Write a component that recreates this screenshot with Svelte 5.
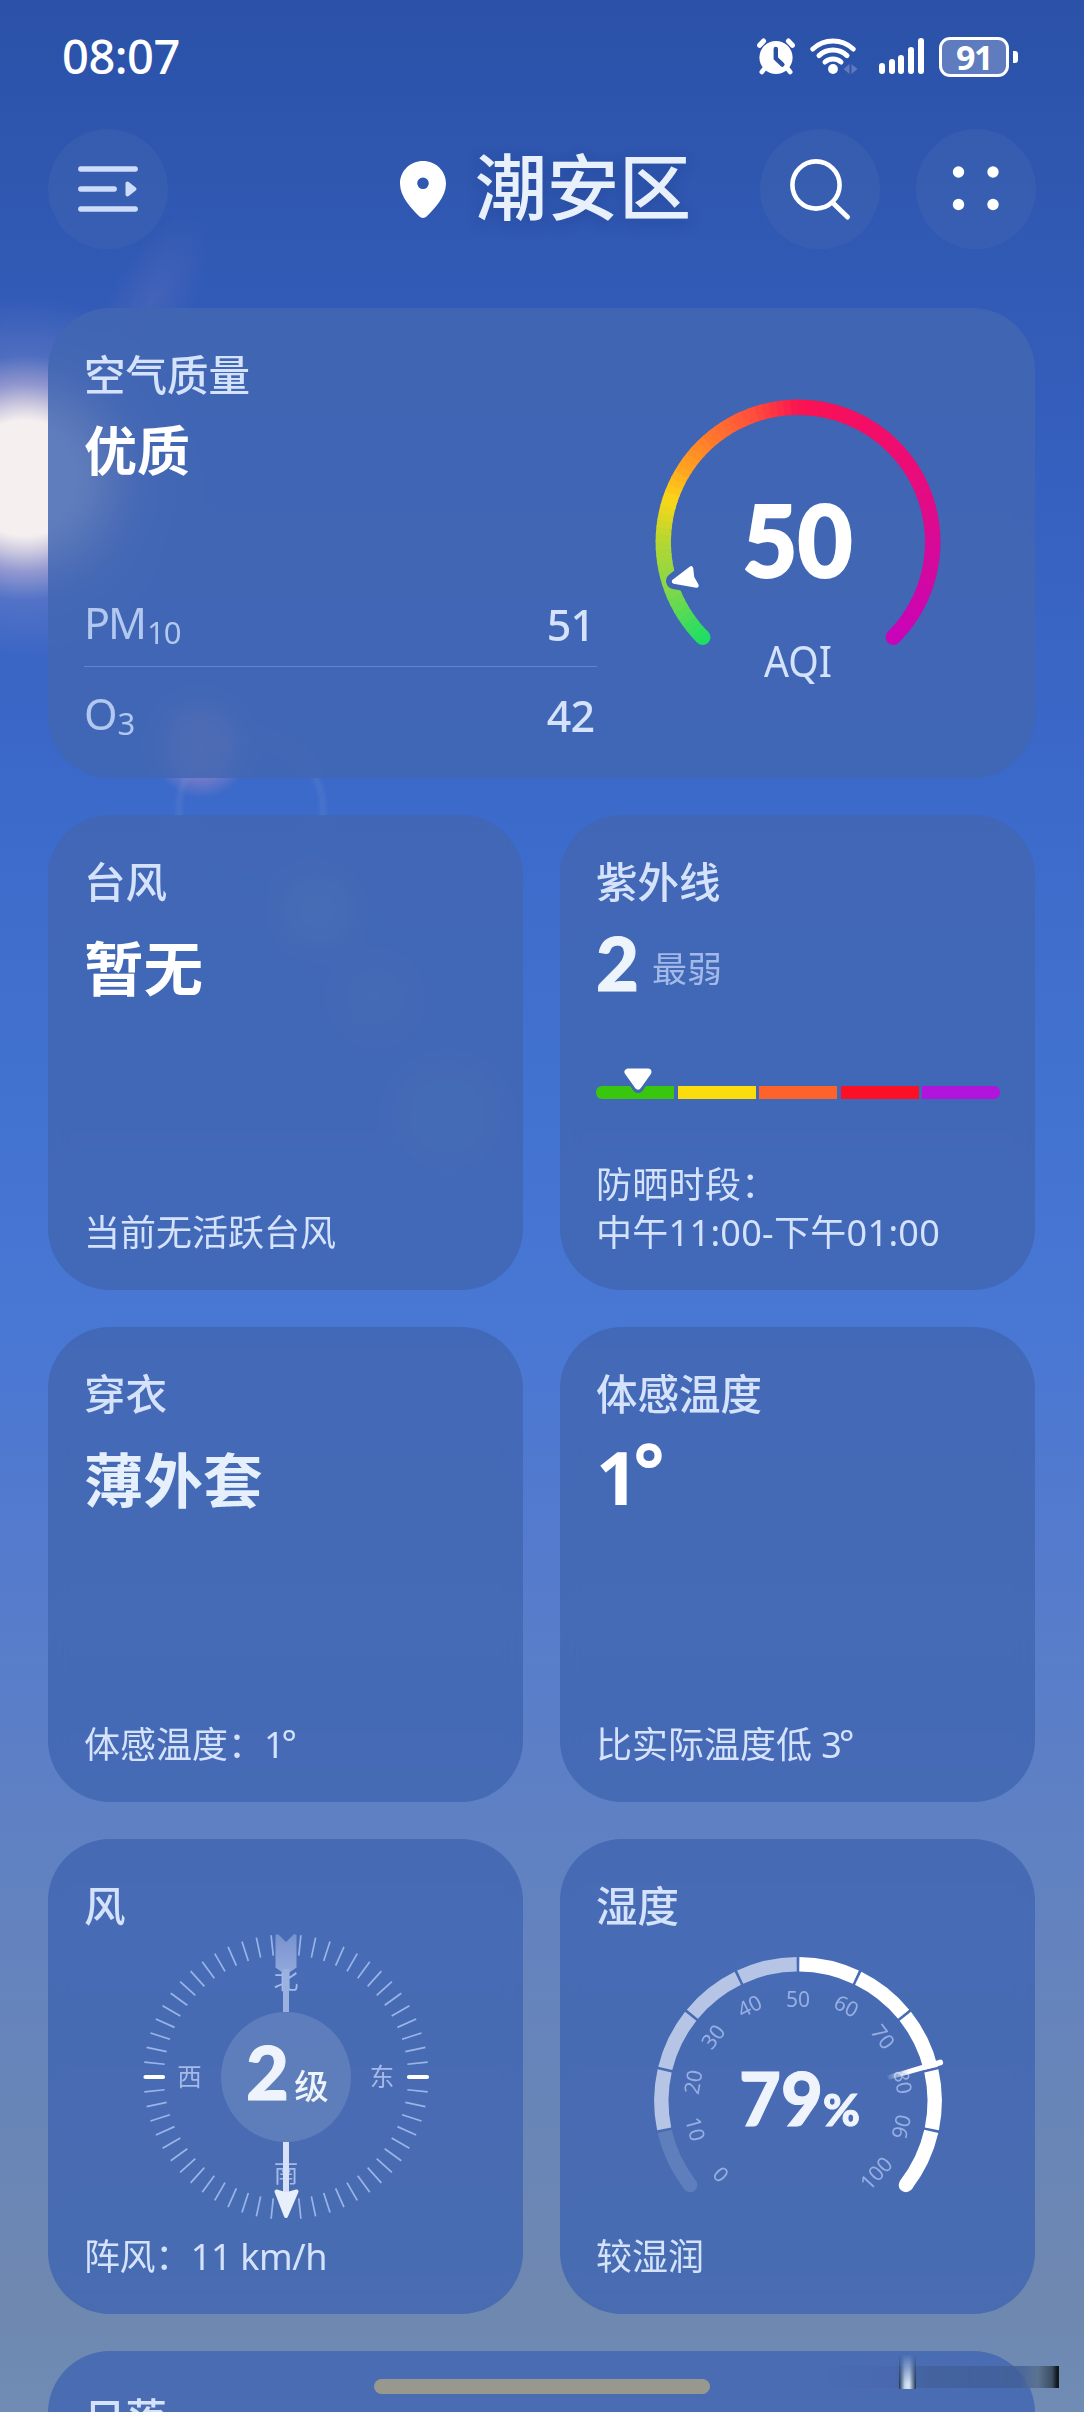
<script lang="ts">
	type Segment = { d: string; fill: string };

	const pollutants = [
		{ name: 'PM', sub: '10', value: 51 },
		{ name: 'O', sub: '3', value: 42 }
	];

	const uvColors = ['#39c60f', '#fbdc0c', '#fd632b', '#fc1026', '#b115dc'];

	const bars = [11, 15, 19.5, 27, 36];

	// angles are measured clockwise from twelve o'clock
	function polar(cx: number, cy: number, r: number, deg: number) {
		const a = ((deg - 90) * Math.PI) / 180;
		return { x: cx + r * Math.cos(a), y: cy + r * Math.sin(a) };
	}

	function arc(cx: number, cy: number, r: number, from: number, to: number) {
		const a = polar(cx, cy, r, from);
		const b = polar(cx, cy, r, to);
		const large = to - from > 180 ? 1 : 0;
		return `M${a.x.toFixed(2)} ${a.y.toFixed(2)}A${r} ${r} 0 ${large} 1 ${b.x.toFixed(2)} ${b.y.toFixed(2)}`;
	}

	const ticks = Array.from({ length: 60 }, (_, i) => i * 6).filter((d) => d % 90 !== 0);

	const step = 25.58;
	const segments: Segment[] = Array.from({ length: 10 }, (_, i) => ({
		d: arc(150, 150, 136.7, (i - 5) * step + (i ? 0.55 : 0), (i - 4) * step - (i < 9 ? 0.55 : 0)),
		fill: i === 0 ? 'rgb(255 255 255 / 0.13)' : i < 5 ? '#b6c5e5' : '#ffffff'
	}));

	const capOuter = polar(150, 150, 143.9, -5 * step);
	const capInner = polar(150, 150, 129.5, -5 * step);
	const startCap = `M${capOuter.x} ${capOuter.y}A7.2 7.2 0 0 0 ${capInner.x} ${capInner.y}Z`;
	const endCap = polar(150, 150, 136.7, 5 * step);

	const dial = [-133.6, -105.3, -79.7, -52.8, -27, 0, 27, 53, 79.7, 104, 132.8].map((deg, i) => ({
		label: i * 10,
		...polar(150, 150, i === 5 ? 101.5 : 106.5, deg),
		turn: Math.abs(deg) > 90 ? deg - Math.sign(deg) * 180 : deg
	}));

	// AQI ring colour stops, painted as short overlapping arcs
	const stops: [number, number[]][] = [
		[-135, [32, 222, 100]],
		[-108, [140, 215, 70]],
		[-90, [180, 215, 50]],
		[-72, [250, 215, 25]],
		[-58, [255, 165, 32]],
		[-40, [255, 120, 45]],
		[-18, [255, 75, 60]],
		[0, [250, 20, 80]],
		[20, [245, 15, 95]],
		[55, [236, 12, 118]],
		[90, [216, 10, 150]],
		[135, [200, 4, 185]]
	];

	function ringColor(deg: number) {
		let i = 0;
		while (i < stops.length - 2 && deg > stops[i + 1][0]) i++;
		const [a, ca] = stops[i];
		const [b, cb] = stops[i + 1];
		const t = (deg - a) / (b - a);
		return `rgb(${ca.map((c, k) => Math.round(c + (cb[k] - c) * t)).join(',')})`;
	}

	const ring = Array.from({ length: 90 }, (_, i) => {
		const from = -135 + i * 3;
		return { d: arc(150, 150, 134.7, from, Math.min(from + 3.6, 135)), color: ringColor(from + 1.5) };
	});
</script>

<div class="screen">
	<div class="sky" aria-hidden="true">
		<i class="sun"></i>
		<i class="ray"></i>
		<i class="orb orb-a"></i>
		<i class="halo"></i>
		<i class="orb orb-b"></i>
		<i class="orb orb-c"></i>
		<i class="orb orb-d"></i>
	</div>

	<div class="status">
		<span class="clock">08:07</span>
		<div class="status-icons">
			<svg class="alarm" width="38" height="38" viewBox="0 0 38 38">
				<circle cx="19" cy="20.5" r="16.6" fill="#fff" />
				<path d="M2.6 8.3 6.6 4M35.4 8.3 31.4 4" stroke="#fff" stroke-width="5" stroke-linecap="round" />
				<path d="M8 31 4.8 35M30 31l3.2 4" stroke="#fff" stroke-width="4.6" stroke-linecap="round" />
				<path d="M18.8 12v9.4l6.6 6.2" fill="none" stroke="#2c51a4" stroke-width="4.4" stroke-linecap="round" stroke-linejoin="round" />
			</svg>
			<svg class="wifi" width="48" height="38" viewBox="0 0 48 38">
				<g fill="none" stroke="#fff" stroke-width="5" stroke-linecap="round">
					<path d="M2.8 12a29.5 29.5 0 0 1 40.4 0" />
					<path d="M9 18.6a20.5 20.5 0 0 1 28 0" />
					<path d="M15 25a12 12 0 0 1 16 0" />
				</g>
				<circle cx="23" cy="32" r="4.9" fill="#fff" />
				<path d="M39.5 27v10l-6-5ZM41.5 27v10l6-5Z" fill="#6079bd" />
			</svg>
			<div class="signal">
				{#each bars as h}
					<i style="height: {h}px"></i>
				{/each}
			</div>
			<div class="battery"><span>91</span></div>
		</div>
	</div>

	<header class="top">
		<button class="round" aria-label="城市列表">
			<svg width="120" height="120" viewBox="0 0 120 120">
				<path d="M32.8 40h54.4M32.8 60h33.4M32.8 80h54.4" stroke="#cddcfb" stroke-width="5.4" stroke-linecap="round" />
				<path d="M79.5 54.5v11l7-5.5Z" fill="#cddcfb" stroke="#cddcfb" stroke-width="4" stroke-linejoin="round" />
			</svg>
		</button>
		<div class="place">
			<svg width="46" height="57" viewBox="0 0 46 57">
				<path
					fill="#fff"
					fill-rule="evenodd"
					d="M23 0C10.3 0 0 9.9 0 22.6c0 13.3 11.5 25 19.2 32.7 2.3 2.2 5.3 2.2 7.6 0C34.5 47.6 46 35.9 46 22.6 46 9.9 35.7 0 23 0Zm0 16.5a5.8 5.8 0 1 1 0 11.6 5.8 5.8 0 0 1 0-11.6Z"
				/>
			</svg>
			<h1>潮安区</h1>
		</div>
		<button class="round" aria-label="搜索">
			<svg width="120" height="120" viewBox="0 0 120 120" fill="none" stroke="#fff" stroke-linecap="round">
				<circle cx="56" cy="56" r="23.6" stroke-width="4.6" />
				<path d="m74 75 13.5 13" stroke-width="5" />
			</svg>
		</button>
		<button class="round" aria-label="更多">
			<svg width="120" height="120" viewBox="0 0 120 120" fill="#fff">
				<circle cx="42.5" cy="43" r="5.7" />
				<circle cx="77" cy="43" r="5.7" />
				<circle cx="42.5" cy="75.5" r="5.7" />
				<circle cx="77" cy="75.5" r="5.7" />
			</svg>
		</button>
	</header>

	<main class="cards">
		<section class="card air">
			<div class="air-info">
				<h2>空气质量</h2>
				<p class="level">优质</p>
				<ul>
					{#each pollutants as p}
						<li>
							<span class="gas">{p.name}<small>{p.sub}</small></span>
							<b>{p.value}</b>
						</li>
					{/each}
				</ul>
			</div>
			<svg class="aqi" width="300" height="300" viewBox="0 0 300 300">
				<circle cx="54.75" cy="245.25" r="7.7" fill={ringColor(-135)} />
				<circle cx="245.25" cy="245.25" r="7.7" fill={ringColor(135)} />
				{#each ring as r}
					<path d={r.d} fill="none" stroke={r.color} stroke-width="15.4" />
				{/each}
				<path d="M26 189 43 175.5l2 9 4.5 8.5Z" fill="#3f66b4" stroke="#3f66b4" stroke-width="16" stroke-linejoin="round" />
				<path d="M26 189.5 43 176.5l1 9 4.5 8Z" fill="#fff" stroke="#fff" stroke-width="4.5" stroke-linejoin="round" />
				<text class="num heavy" x="149.500" y="184.500" font-size="99" text-anchor="middle" textLength="110" lengthAdjust="spacingAndGlyphs">50</text>
				<text class="unit" x="150" y="285" font-size="43" text-anchor="middle" textLength="68" lengthAdjust="spacingAndGlyphs">AQI</text>
			</svg>
		</section>

		<section class="card">
			<h2>台风</h2>
			<p class="value">暂无</p>
			<p class="note">当前无活跃台风</p>
		</section>

		<section class="card">
			<h2>紫外线</h2>
			<p class="uv-value"><b>2</b><span>最弱</span></p>
			<div class="uv-bar">
				{#each uvColors as color}
					<i style="background: {color}"></i>
				{/each}
				<svg width="40" height="32" viewBox="0 0 40 32">
					<path d="M10 6h20L20 21Z" fill="#4068b5" stroke="#4068b5" stroke-width="12" stroke-linejoin="round" />
					<path d="M10 6h20L20 20Z" fill="#fff" stroke="#fff" stroke-width="7" stroke-linejoin="round" />
				</svg>
			</div>
			<p class="note hours">防晒时段：<br />中午11:00-下午01:00</p>
		</section>

		<section class="card">
			<h2>穿衣</h2>
			<p class="value soft">薄外套</p>
			<p class="note">体感温度：1<span class="deg">°</span></p>
		</section>

		<section class="card">
			<h2>体感温度</h2>
			<p class="value degrees">1<span>°</span></p>
			<p class="note">比实际温度低 3<span class="deg">°</span></p>
		</section>

		<section class="card">
			<h2>风</h2>
			<svg class="dial" width="300" height="300" viewBox="0 0 300 300">
				<defs>
					<linearGradient id="tail" x1="0" y1="0" x2="0" y2="1">
						<stop offset="0" stop-color="#7892ce" />
						<stop offset="1" stop-color="#92a9dc" />
					</linearGradient>
				</defs>
				{#each ticks as deg}
					<path d="M150 7.5v20.5" transform="rotate({deg} 150 150)" stroke="#a9c1f2" stroke-opacity="0.85" stroke-width="1.7" />
				{/each}
				<path d="M9.5 150h17.5M273 150h18" stroke="#fff" stroke-width="4.2" stroke-linecap="round" />
				<g class="compass" font-size="24.5" text-anchor="middle">
					<text x="150" y="61.500">北</text>
					<text x="150" y="254.500">南</text>
					<text x="53.5" y="159">西</text>
					<text x="246" y="159">东</text>
				</g>
				<path d="M139.5 8q2-1.500 4 .5l6.5 6.5 6.5-6.500q2-2 4-.5v32.500l-7 5h-7l-7-5Z" fill="url(#tail)" />
				<path d="M150 42v43" stroke="#9bb1df" stroke-width="6" />
				<circle cx="150" cy="150" r="65" fill="#fff" fill-opacity="0.12" />
				<path d="M150 215v52" stroke="#d6e1f8" stroke-width="6" />
				<path d="M140.5 264.5 150 267.5l10.5-3L150 289Z" fill="#e8effc" stroke="#e8effc" stroke-width="4" stroke-linejoin="round" />
				<text class="num pale" x="131.500" y="172.500" font-size="74" text-anchor="middle">2</text>
				<text class="grade" x="175.500" y="171.500" font-size="34.5" text-anchor="middle">级</text>
			</svg>
			<p class="note tight">阵风：11 km/h</p>
		</section>

		<section class="card">
			<h2>湿度</h2>
			<svg class="dial wet" width="300" height="300" viewBox="0 0 300 300">
				<defs>
					<linearGradient id="needle" gradientUnits="userSpaceOnUse" x1="238" y1="127" x2="262" y2="121">
						<stop offset="0" stop-color="#fff" stop-opacity="0" />
						<stop offset="1" stop-color="#fff" />
					</linearGradient>
				</defs>
				{#each segments as s}
					<path d={s.d} fill="none" stroke={s.fill} stroke-width="14.4" />
				{/each}
				<path d={startCap} fill="#fff" fill-opacity="0.13" />
				<circle cx={endCap.x} cy={endCap.y} r="7.2" fill="#fff" />
				<g class="scale" font-size="21" text-anchor="middle">
					{#each dial as d}
						<text x={d.x} y={d.y} dy="7.5" transform="rotate({d.turn} {d.x} {d.y})">{d.label}</text>
					{/each}
				</g>
				<path d="M239 124.5 291.5 108.7a2.8 2.8 0 0 1 1.5 5.5L240 129Z" fill="url(#needle)" />
				<text class="num pale" x="91" y="174.500" font-size="74" textLength="84" lengthAdjust="spacingAndGlyphs">79</text>
				<text class="num pale" x="175" y="174.500" font-size="43" textLength="37" lengthAdjust="spacingAndGlyphs">%</text>
			</svg>
			<p class="note">较湿润</p>
		</section>

		<section class="card sunset">
			<h2>日落</h2>
		</section>
	</main>

	<div class="smear" aria-hidden="true"><i></i></div>
	<div class="home-bar"></div>
</div>

<style>
	:global(body) {
		background: #708cb4;
	}

	.screen {
		position: relative;
		width: 1084px;
		height: 2412px;
		overflow: hidden;
		font-family: 'Noto Sans', 'Noto Sans CJK SC', sans-serif;
		color: #d5e2fb;
		background: linear-gradient(
			#2b51a8 0,
			#2e56ae 130px,
			#325bb7 300px,
			#3761c0 500px,
			#3c6aca 800px,
			#4272d0 1080px,
			#4877d4 1320px,
			#527ace 1500px,
			#5a7ec8 1700px,
			#6483be 1950px,
			#6e88b0 2300px,
			#708cb4 2412px
		);
	}

	h1,
	h2,
	p,
	ul {
		margin: 0;
		padding: 0;
		list-style: none;
	}

	/* Lens flare running down from the sun at the left edge */
	.sky i {
		position: absolute;
		border-radius: 50%;
	}
	.sun {
		left: -155px;
		top: 298px;
		width: 360px;
		height: 360px;
		background: radial-gradient(
			closest-side,
			#f5f0ef 32%,
			rgb(232 222 230 / 0.9) 39%,
			rgb(190 178 215 / 0.68) 52%,
			rgb(130 140 205 / 0.35) 68%,
			rgb(90 120 200 / 0) 100%
		);
	}
	.ray {
		left: 112px;
		top: 205px;
		width: 80px;
		height: 190px;
		transform: rotate(28deg);
		background: radial-gradient(closest-side, rgb(140 130 190 / 0.2), transparent);
	}
	.orb-a {
		left: 150px;
		top: 690px;
		width: 102px;
		height: 108px;
		background: radial-gradient(closest-side, rgb(195 150 195 / 0.6) 40%, rgb(170 140 200 / 0.4) 70%, transparent);
	}
	.halo {
		left: 176px;
		top: 735px;
		width: 138px;
		height: 138px;
		border: 6px solid rgb(150 165 220 / 0.16);
		filter: blur(2px);
	}
	.orb-b {
		left: 263px;
		top: 855px;
		width: 110px;
		height: 110px;
		background: radial-gradient(closest-side, rgb(160 180 200 / 0.4) 30%, transparent);
	}
	.orb-c {
		left: 320px;
		top: 940px;
		width: 110px;
		height: 110px;
		background: radial-gradient(closest-side, rgb(150 170 210 / 0.25) 30%, transparent);
	}
	.orb-d {
		left: 385px;
		top: 1050px;
		width: 125px;
		height: 125px;
		background: radial-gradient(closest-side, rgb(160 190 200 / 0.18) 70%, transparent);
	}

	.status {
		position: relative;
		display: flex;
		justify-content: space-between;
		align-items: center;
		height: 112px;
		padding: 0 67px 0 62px;
		color: #fff;
	}
	.clock {
		font-size: 47px;
		line-height: 64px;
		font-weight: 500;
		letter-spacing: -0.5px;
	}
	.status-icons {
		display: flex;
		align-items: center;
	}
	.wifi {
		margin-left: 15px;
	}
	.signal {
		display: flex;
		align-items: flex-end;
		gap: 3.8px;
		height: 36px;
		margin-left: 21px;
	}
	.signal i {
		width: 6px;
		border-radius: 3px;
		background: #fff;
	}
	.battery {
		position: relative;
		display: grid;
		place-items: center;
		box-sizing: border-box;
		width: 70px;
		height: 40px;
		margin: 2px 8px 0 15px;
		border: 3.5px solid #fff;
		border-radius: 11px;
		background: rgb(255 255 255 / 0.24);
		font: 700 34px/34px 'Noto Sans', sans-serif;
		letter-spacing: -1.5px;
	}
	.battery::after {
		content: '';
		position: absolute;
		right: -12px;
		top: 11px;
		width: 5px;
		height: 12px;
		border-radius: 0 3px 3px 0;
		background: #fff;
	}

	.top {
		position: relative;
		display: grid;
		grid-template-columns: 120px 1fr 120px 120px;
		column-gap: 36px;
		align-items: center;
		height: 120px;
		margin: 17px 48px 59px;
	}
	.round {
		width: 120px;
		height: 120px;
		padding: 0;
		border: 0;
		border-radius: 50%;
		background: rgb(120 150 180 / 0.1);
	}
	.round svg {
		display: block;
	}
	.place {
		display: flex;
		align-items: center;
		gap: 29px;
		padding-left: 196px;
	}
	h1 {
		margin-top: -13px;
		font: 500 72px/80px 'Noto Sans CJK SC', sans-serif;
		white-space: nowrap;
		color: #e8f0fc;
		text-shadow: 0 4px 14px rgb(20 40 110 / 0.3);
	}

	.cards {
		position: relative;
		display: grid;
		grid-template-columns: 475px 475px;
		grid-template-rows: 470px;
		grid-auto-rows: 475px;
		gap: 37px;
		margin: 0 48px;
	}
	.card {
		position: relative;
		display: flex;
		flex-direction: column;
		box-sizing: border-box;
		padding: 40px 37px 33px 36px;
		border-radius: 62px;
		background: rgb(65 103 178 / 0.84);
		backdrop-filter: blur(8px);
	}
	.air {
		grid-column: 1 / -1;
		flex-direction: row;
		justify-content: space-between;
	}
	.sunset {
		grid-column: 1 / -1;
	}
	h2 {
		font: 500 41.5px/50px 'Noto Sans CJK SC', sans-serif;
	}

	.air-info {
		display: flex;
		flex-direction: column;
		width: 513px;
	}
	.level {
		margin-top: 18px;
		font: 700 53px/64px 'Noto Sans CJK SC', sans-serif;
		color: #fff;
	}
	ul {
		margin-top: 96px;
	}
	li {
		display: flex;
		justify-content: space-between;
		align-items: center;
		box-sizing: border-box;
		height: 90px;
		padding: 8px 3px 0 0;
		font-size: 43px;
		line-height: 60px;
	}
	li + li {
		border-top: 1.5px solid rgb(150 180 235 / 0.4);
	}
	.gas {
		color: #b3c8ef;
		letter-spacing: -2px;
	}
	.gas small {
		position: relative;
		top: 5px;
		margin-left: 2px;
		font-size: 31px;
		letter-spacing: -1px;
	}
	li b {
		font-weight: 500;
		letter-spacing: -1px;
	}
	.aqi {
		margin: 44px 50px 0 0;
	}

	.num {
		font-family: Lato, sans-serif;
		font-weight: 900;
		fill: #fff;
	}
	.heavy {
		stroke: #fff;
		stroke-width: 2px;
	}
	.pale {
		fill: #eff4fc;
		stroke: #eff4fc;
		stroke-width: 1px;
	}
	.unit {
		fill: #d5e2fb;
	}

	.value {
		margin-top: 25px;
		font: 700 59.5px/70px 'Noto Sans CJK SC', sans-serif;
		color: #fff;
	}
	.soft {
		color: #e6effc;
	}
	.degrees {
		font: 700 74px/70px 'Noto Sans', sans-serif;
	}
	.degrees span {
		position: relative;
		top: -9px;
		left: -5px;
	}
	.note {
		margin-top: auto;
		font-size: 36px;
		line-height: 48px;
	}
	.hours {
		letter-spacing: 0.3px;
	}
	.tight {
		letter-spacing: -0.4px;
	}
	.deg {
		position: relative;
		top: -2px;
		left: -3px;
	}

	.uv-value {
		display: flex;
		align-items: baseline;
		gap: 13px;
		height: 70px;
		margin-top: 18px;
	}
	.uv-value b {
		font: 900 74px/80px Lato, sans-serif;
		color: #eef4fc;
		-webkit-text-stroke: 1px #eef4fc;
	}
	.uv-value span {
		position: relative;
		top: -9px;
		font-size: 35px;
		color: #a3b9e8;
	}
	.uv-bar {
		position: relative;
		display: flex;
		gap: 3.5px;
		width: 404px;
		height: 12.5px;
		margin-top: 93px;
	}
	.uv-bar i {
		flex: 1;
	}
	.uv-bar i:first-child {
		border-radius: 6px 0 0 6px;
	}
	.uv-bar i:last-of-type {
		border-radius: 0 6px 6px 0;
	}
	.uv-bar svg {
		position: absolute;
		left: 22px;
		top: -20px;
	}

	.dial {
		margin: -2px 0 0 52px;
		flex-shrink: 0;
	}
	.wet {
		margin-top: 22px;
		margin-bottom: -24px;
	}
	.compass,
	.grade {
		font-family: 'Noto Sans CJK SC', sans-serif;
		fill: #a5bae8;
	}
	.grade {
		font-weight: 500;
		fill: #eef4fc;
	}
	.scale {
		fill: #96aee2;
	}

	/* Leftover glitch strip beside the home bar */
	.smear {
		position: absolute;
		left: 830px;
		top: 2366px;
		width: 229px;
		height: 22px;
		background: linear-gradient(
			90deg,
			rgb(70 100 170 / 0) 0,
			rgb(75 100 175 / 0.5) 60px,
			rgb(65 95 150 / 0.7) 100px,
			rgb(65 95 150 / 0.8) 190px,
			#5b7391 208px,
			#3c4f62 222px,
			#10181e 227px
		);
	}
	.smear i {
		position: absolute;
		left: 69px;
		top: -12px;
		width: 17px;
		height: 35px;
		background: linear-gradient(90deg, #1c3350, #c4d8ee 35%, #d8e6f4 60%, #1c3350);
		mask-image: linear-gradient(transparent, #000 85%);
	}
	.home-bar {
		position: absolute;
		left: 374px;
		top: 2379px;
		width: 336px;
		height: 15px;
		border-radius: 8px;
		background: #98988f;
	}
</style>
